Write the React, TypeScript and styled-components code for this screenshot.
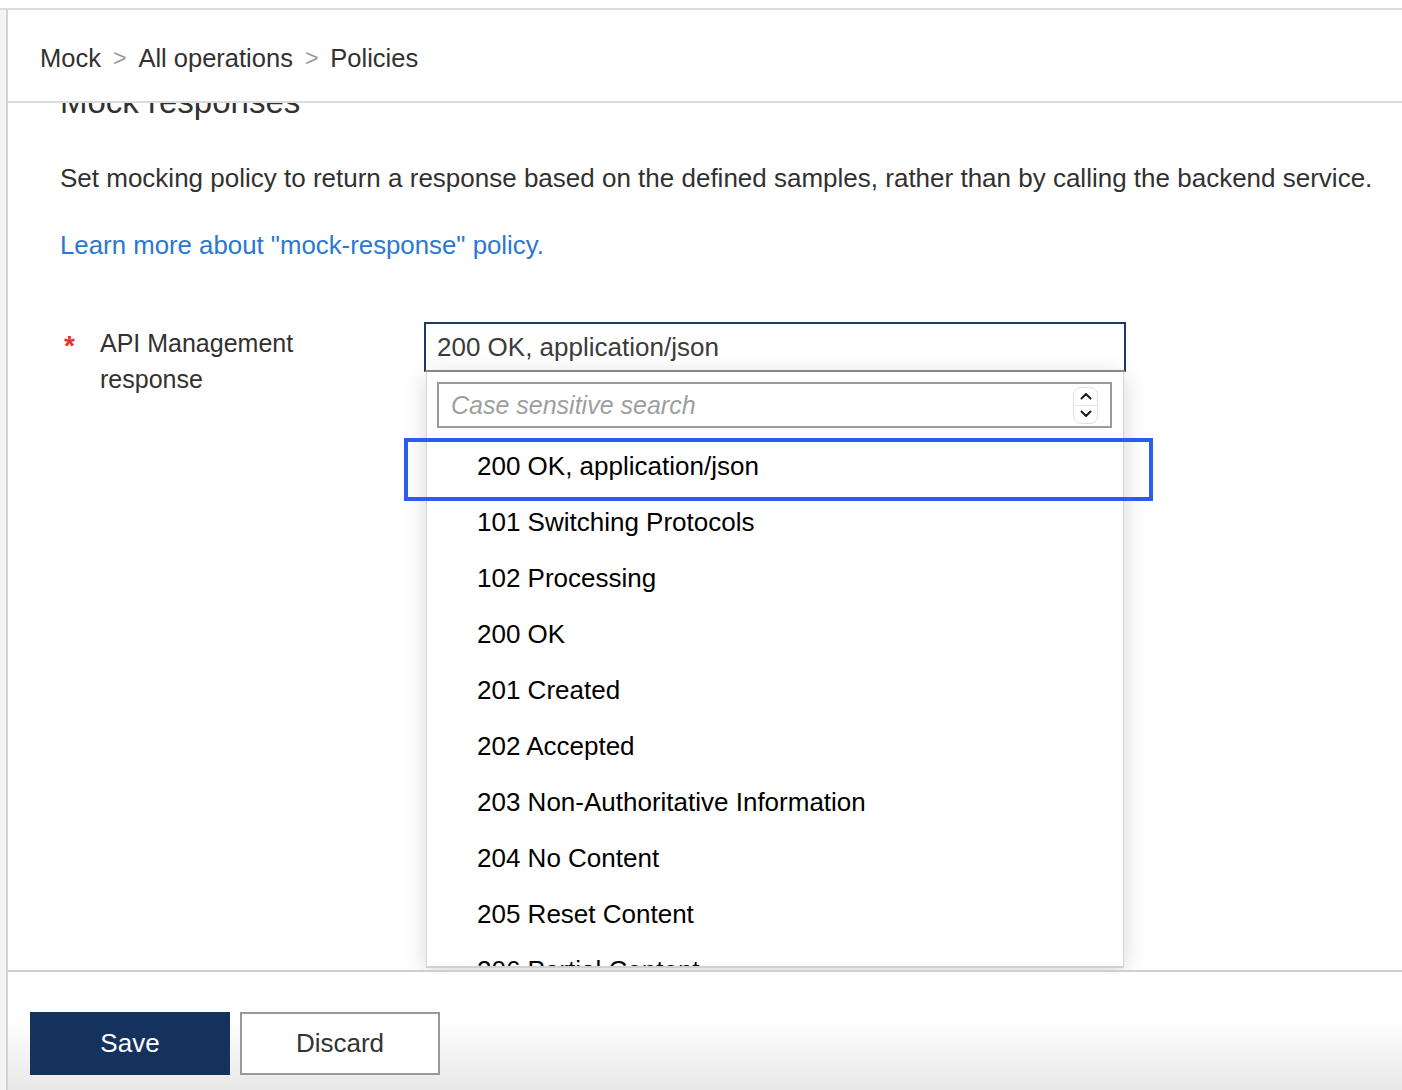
import React from "react";
import styled, { createGlobalStyle } from "styled-components";

const Global = createGlobalStyle`
  html, body { margin: 0; padding: 0; background: #ffffff; }
  body { font-family: "Liberation Sans", Arial, sans-serif; color: #323130; }
  * { box-sizing: border-box; }
`;

const Page = styled.div`
  height: 1090px;
  padding-top: 8px;
  overflow: hidden;
`;

const Frame = styled.div`
  display: flex;
  height: 1082px;
  border-top: 2px solid #dcdcdc;
`;

const Strip = styled.div`
  width: 6px;
  background: #f4f4f4;
`;

const Blade = styled.div`
  flex: 1;
  display: flex;
  flex-direction: column;
  border-left: 2px solid #d4d4d4;
  min-width: 0;
`;

const Header = styled.header`
  height: 93px;
  flex: none;
  display: flex;
  align-items: center;
  padding: 5px 0 0 32px;
  border-bottom: 2px solid #dcdcdc;
  background: #fff;
  position: relative;
  z-index: 2;
`;

const Crumbs = styled.nav`
  display: flex;
  align-items: center;
  gap: 12px;
  font-size: 25.5px;
  color: #323130;
`;

const Sep = styled.span`
  color: #9a9a9a;
  font-size: 23px;
`;

const Content = styled.main`
  flex: 1;
  overflow: hidden;
  padding-left: 52px;
  min-height: 0;
`;

const Heading = styled.h1`
  margin: -21px 0 0 0;
  font-size: 33px;
  font-weight: 400;
  line-height: 40px;
  color: #323130;
`;

const Description = styled.p`
  margin: 38px 0 0 0;
  font-size: 26px;
  line-height: 36px;
  color: #323130;
  white-space: nowrap;
`;

const LearnLink = styled.a`
  display: block;
  margin-top: 31px;
  font-size: 25.8px;
  line-height: 36px;
  color: #2b78d0;
  text-decoration: none;
`;

const FormRow = styled.div`
  display: grid;
  grid-template-columns: 40px 324px 702px;
  margin-top: 59px;
  align-items: start;
`;

const Required = styled.span`
  color: #e8312b;
  font-size: 28px;
  font-weight: 700;
  line-height: 36px;
  padding: 6px 0 0 4px;
`;

const Label = styled.label`
  font-size: 25px;
  line-height: 36px;
  color: #323130;
  padding-top: 3px;
`;

const SelectWrap = styled.div`
  position: relative;
`;

const SelectBox = styled.div`
  height: 50px;
  border: 2px solid #1c3966;
  border-bottom-color: #8c8c8c;
  display: flex;
  align-items: center;
  padding-left: 11px;
  font-size: 26px;
  color: #3b3b3b;
  background: #fff;
`;

const Dropdown = styled.div`
  position: absolute;
  top: 50px;
  left: 2px;
  width: 698px;
  height: 596px;
  background: #fff;
  border: 1px solid #d6d6d6;
  border-top: none;
  border-bottom: 2px solid #d0d0d0;
  box-shadow: 0 4px 22px rgba(0, 0, 0, 0.16);
  z-index: 3;
`;

const SearchRow = styled.div`
  padding: 10px 11px 10px 10px;
`;

const SearchBox = styled.div`
  height: 46px;
  border: 2px solid #9b9b9b;
  display: flex;
  align-items: center;
  justify-content: space-between;
  padding: 0 12px 0 12px;
`;

const Placeholder = styled.span`
  font-size: 25px;
  font-style: italic;
  color: #9e9e9e;
`;

const Spinner = styled.div`
  width: 25px;
  height: 37px;
  border: 1px solid #e2e2e2;
  border-radius: 8px;
  display: flex;
  flex-direction: column;
  overflow: hidden;
  background: #fff;
`;

const SpinHalf = styled.div<{ $top?: boolean }>`
  flex: 1;
  display: flex;
  align-items: center;
  justify-content: center;
  border-bottom: ${(p) => (p.$top ? "1px solid #e6e6e6" : "none")};
`;

const List = styled.ul`
  list-style: none;
  margin: 0 -32px;
  padding: 0 32px;
  height: 528px;
  overflow: hidden;
`;

const Item = styled.li<{ $focused?: boolean }>`
  position: relative;
  height: 56px;
  display: flex;
  align-items: center;
  padding-left: 50px;
  font-size: 26px;
  color: #000;
  &::after {
    content: "";
    display: ${(p) => (p.$focused ? "block" : "none")};
    position: absolute;
    left: -23px;
    right: -30px;
    top: 0;
    height: 55px;
    border: 4px solid #2a5cf0;
  }
`;

const Footer = styled.footer`
  flex: none;
  height: 120px;
  border-top: 2px solid #cfcfcf;
  padding: 40px 0 0 22px;
  display: flex;
  gap: 10px;
  align-items: flex-start;
  background: linear-gradient(to bottom, #ffffff 0%, #ffffff 40%, #e8e8e8 100%);
`;

const Button = styled.button<{ $primary?: boolean }>`
  width: 200px;
  height: 63px;
  font-family: inherit;
  font-size: 26px;
  cursor: pointer;
  border: ${(p) => (p.$primary ? "none" : "2px solid #999")};
  background: ${(p) => (p.$primary ? "#15325f" : "#fff")};
  color: ${(p) => (p.$primary ? "#fff" : "#333")};
`;

const Chevron = ({ up }: { up?: boolean }) => (
  <svg width="12" height="8" viewBox="0 0 12 8">
    <path
      d={up ? "M1.5 6.5 L6 2 L10.5 6.5" : "M1.5 1.5 L6 6 L10.5 1.5"}
      fill="none"
      stroke="#1a1a1a"
      strokeWidth="2"
      strokeLinecap="round"
      strokeLinejoin="round"
    />
  </svg>
);

const options = [
  "200 OK, application/json",
  "101 Switching Protocols",
  "102 Processing",
  "200 OK",
  "201 Created",
  "202 Accepted",
  "203 Non-Authoritative Information",
  "204 No Content",
  "205 Reset Content",
  "206 Partial Content",
];

export default function App() {
  return (
    <>
      <Global />
      <Page>
        <Frame>
          <Strip />
          <Blade>
            <Header>
              <Crumbs>
                <span>Mock</span>
                <Sep>&gt;</Sep>
                <span>All operations</span>
                <Sep>&gt;</Sep>
                <span>Policies</span>
              </Crumbs>
            </Header>
            <Content>
              <Heading>Mock responses</Heading>
              <Description>
                Set mocking policy to return a response based on the defined samples, rather than by calling the backend service.
              </Description>
              <LearnLink href="#">Learn more about "mock-response" policy.</LearnLink>
              <FormRow>
                <Required>*</Required>
                <Label>
                  API Management
                  <br />
                  response
                </Label>
                <SelectWrap>
                  <SelectBox>200 OK, application/json</SelectBox>
                  <Dropdown>
                    <SearchRow>
                      <SearchBox>
                        <Placeholder>Case sensitive search</Placeholder>
                        <Spinner>
                          <SpinHalf $top>
                            <Chevron up />
                          </SpinHalf>
                          <SpinHalf>
                            <Chevron />
                          </SpinHalf>
                        </Spinner>
                      </SearchBox>
                    </SearchRow>
                    <List>
                      {options.map((o, i) => (
                        <Item key={o} $focused={i === 0}>
                          {o}
                        </Item>
                      ))}
                    </List>
                  </Dropdown>
                </SelectWrap>
              </FormRow>
            </Content>
            <Footer>
              <Button $primary>Save</Button>
              <Button>Discard</Button>
            </Footer>
          </Blade>
        </Frame>
      </Page>
    </>
  );
}
